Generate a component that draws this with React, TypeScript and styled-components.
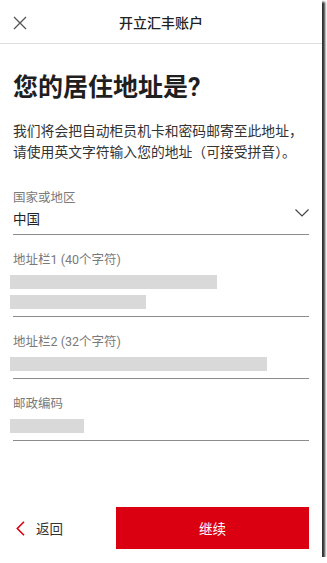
import React from 'react';
import styled, { createGlobalStyle } from 'styled-components';

const GlobalStyle = createGlobalStyle`
    html, body {
        margin: 0;
        padding: 0;
        background: #ffffff;
    }
    body {
        font-family: Roboto, "Noto Sans CJK SC", sans-serif;
        color: #222;
    }
`;

const Frame = styled.div`
    width: 322px;
    height: 557px;
    background: #ffffff;
    box-shadow: 3px 2px 2px rgba(0, 0, 0, 0.8);
    display: flex;
    flex-direction: column;
`;

const Header = styled.div`
    height: 43px;
    border-bottom: 1px solid #dedede;
    display: flex;
    align-items: center;
    justify-content: center;
    position: relative;
`;

const CloseButton = styled.button`
    position: absolute;
    left: 12px;
    top: 15px;
    width: 16px;
    height: 16px;
    padding: 0;
    border: none;
    background: none;
    display: flex;
`;

const HeaderTitle = styled.div`
    font-size: 14px;
    font-weight: 500;
    color: #222;
`;

const Content = styled.div`
    padding: 0 13px;
    display: flex;
    flex-direction: column;
`;

const Heading = styled.h1`
    margin: 29px 0 0;
    font-size: 25px;
    line-height: 30px;
    font-weight: 700;
    color: #1f1f1f;
`;

const Intro = styled.p`
    margin: 18px 0 0;
    font-size: 13.8px;
    line-height: 20.5px;
    color: #333;
`;

const Field = styled.div<{ $first?: boolean }>`
    margin-top: ${(p) => (p.$first ? '28px' : '17px')};
    padding-bottom: ${(p) => (p.$first ? '5px' : '7px')};
    border-bottom: 1px solid #8c8c8c;
    display: flex;
    flex-direction: column;
    position: relative;
`;

const Label = styled.div<{ $tight?: boolean }>`
    font-size: 12.5px;
    line-height: 16px;
    color: #7a7a7a;
    margin-bottom: ${(p) => (p.$tight ? '3px' : '7px')};
`;

const Value = styled.div`
    font-size: 13.5px;
    line-height: 20px;
    color: #222;
`;

const Chevron = styled.svg`
    position: absolute;
    right: 0;
    top: 19px;
`;

const Bars = styled.div`
    display: flex;
    flex-direction: column;
    gap: 6px;
    margin-left: -3px;
`;

const Bar = styled.div<{ $w: number }>`
    width: ${(p) => p.$w}px;
    height: 14px;
    background: #d9d9d9;
`;

const Footer = styled.div`
    margin-top: auto;
    padding: 0 13px 8px;
    display: flex;
    align-items: center;
`;

const BackLink = styled.button`
    flex: 1;
    display: flex;
    align-items: center;
    gap: 11px;
    padding: 0 0 0 3px;
    border: none;
    background: none;
    font-family: inherit;
    font-size: 13.5px;
    color: #333;
    text-align: left;
`;

const ContinueButton = styled.button`
    width: 193px;
    height: 42px;
    border: none;
    background: #db0011;
    color: #ffffff;
    font-family: inherit;
    font-size: 13.5px;
`;

const App = () => {
    return (
        <>
            <GlobalStyle />
            <Frame>
                <Header>
                    <CloseButton aria-label="关闭">
                        <svg width="16" height="16" viewBox="0 0 16 16">
                            <path d="M2 2 L14 14 M14 2 L2 14" stroke="#555" strokeWidth="1.3" fill="none" />
                        </svg>
                    </CloseButton>
                    <HeaderTitle>开立汇丰账户</HeaderTitle>
                </Header>
                <Content>
                    <Heading>您的居住地址是?</Heading>
                    <Intro>
                        我们将会把自动柜员机卡和密码邮寄至此地址，请使用英文字符输入您的地址（可接受拼音）。
                    </Intro>
                    <Field $first>
                        <Label $tight>国家或地区</Label>
                        <Value>中国</Value>
                        <Chevron width="14" height="8" viewBox="0 0 14 8">
                            <path d="M0.5 0.5 L7 7 L13.5 0.5" stroke="#444" strokeWidth="1.2" fill="none" />
                        </Chevron>
                    </Field>
                    <Field>
                        <Label>地址栏1 (40个字符)</Label>
                        <Bars>
                            <Bar $w={207} />
                            <Bar $w={136} />
                        </Bars>
                    </Field>
                    <Field>
                        <Label>地址栏2 (32个字符)</Label>
                        <Bars>
                            <Bar $w={257} />
                        </Bars>
                    </Field>
                    <Field>
                        <Label>邮政编码</Label>
                        <Bars>
                            <Bar $w={74} />
                        </Bars>
                    </Field>
                </Content>
                <Footer>
                    <BackLink>
                        <svg width="9" height="15" viewBox="0 0 9 15">
                            <path d="M8 0.7 L1.3 7.5 L8 14.3" stroke="#db0011" strokeWidth="1.6" fill="none" />
                        </svg>
                        返回
                    </BackLink>
                    <ContinueButton>继续</ContinueButton>
                </Footer>
            </Frame>
        </>
    );
};

export default App;
